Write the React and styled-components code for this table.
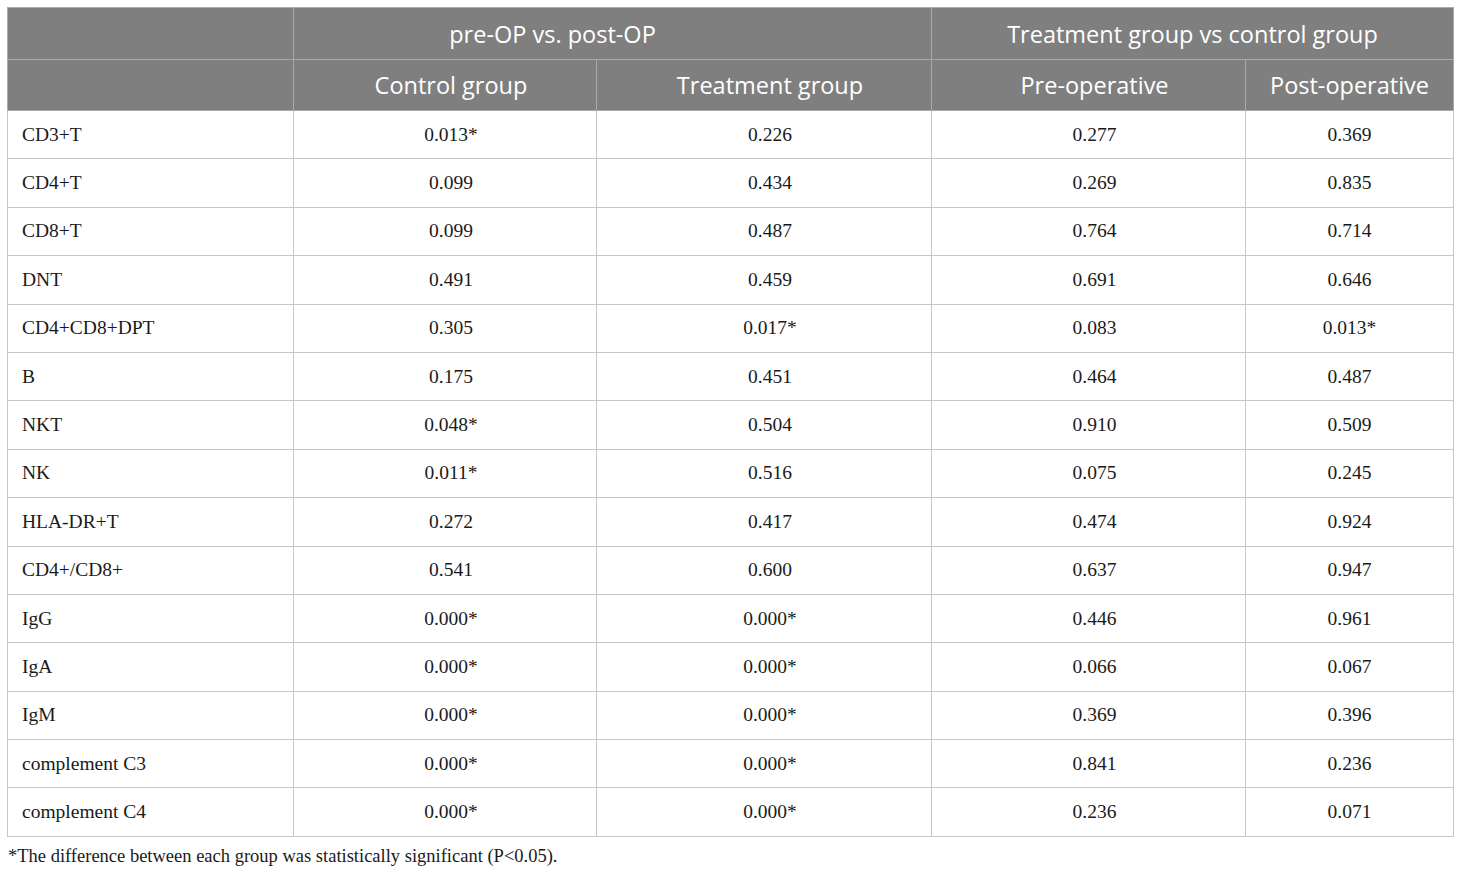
import React from "react";
import styled, { createGlobalStyle } from "styled-components";

const GlobalStyle = createGlobalStyle`
  html, body {
    margin: 0;
    padding: 0;
    background: #ffffff;
  }
`;

const Page = styled.div`
  padding: 7px 8px 0 7px;
  width: 1460px;
  box-sizing: border-box;
`;

const Table = styled.table`
  width: 1446px;
  border-collapse: collapse;
  table-layout: fixed;
  border: 1px solid #c6c6c6;
`;

const HeadCell = styled.th`
  background: #7f7f7f;
  color: #ffffff;
  font-family: "Open Sans", "Noto Sans", sans-serif;
  font-weight: 400;
  font-size: 23.5px;
  text-align: center;
  height: ${({ $h }) => $h}px;
  padding: ${({ $pad }) => $pad || "0"};
  border: 1px solid #a9a9a9;
  box-sizing: border-box;
  white-space: nowrap;
`;

const Cell = styled.td`
  font-family: "Liberation Serif", "Times New Roman", serif;
  font-size: 19.5px;
  color: #1a1a1a;
  text-align: ${({ $left }) => ($left ? "left" : "center")};
  padding: ${({ $left, $shift }) => ($left ? "0 0 0 14px" : `0 0 0 ${$shift ? 12 : 0}px`)};
  height: 48.4px;
  border: 1px solid #c6c6c6;
  box-sizing: border-box;
`;

const Note = styled.p`
  margin: 9px 0 0 1px;
  font-family: "Liberation Serif", "Times New Roman", serif;
  font-size: 18.5px;
  color: #1a1a1a;
`;

const rows = [
  ["CD3+T", "0.013*", "0.226", "0.277", "0.369"],
  ["CD4+T", "0.099", "0.434", "0.269", "0.835"],
  ["CD8+T", "0.099", "0.487", "0.764", "0.714"],
  ["DNT", "0.491", "0.459", "0.691", "0.646"],
  ["CD4+CD8+DPT", "0.305", "0.017*", "0.083", "0.013*"],
  ["B", "0.175", "0.451", "0.464", "0.487"],
  ["NKT", "0.048*", "0.504", "0.910", "0.509"],
  ["NK", "0.011*", "0.516", "0.075", "0.245"],
  ["HLA-DR+T", "0.272", "0.417", "0.474", "0.924"],
  ["CD4+/CD8+", "0.541", "0.600", "0.637", "0.947"],
  ["IgG", "0.000*", "0.000*", "0.446", "0.961"],
  ["IgA", "0.000*", "0.000*", "0.066", "0.067"],
  ["IgM", "0.000*", "0.000*", "0.369", "0.396"],
  ["complement C3", "0.000*", "0.000*", "0.841", "0.236"],
  ["complement C4", "0.000*", "0.000*", "0.236", "0.071"],
];

const widths = [286, 303, 335, 314, 208];

export default function App() {
  return (
    <Page>
      <GlobalStyle />
      <Table>
        <colgroup>
          {widths.map((w, i) => (
            <col key={i} style={{ width: w }} />
          ))}
        </colgroup>
        <thead>
          <tr>
            <HeadCell $h={52} />
            <HeadCell $h={52} colSpan={2} $pad="0 120px 0 0">
              pre-OP vs. post-OP
            </HeadCell>
            <HeadCell $h={52} colSpan={2}>
              Treatment group vs control group
            </HeadCell>
          </tr>
          <tr>
            <HeadCell $h={51} />
            <HeadCell $h={51} $pad="0 0 0 12px">Control group</HeadCell>
            <HeadCell $h={51} $pad="0 0 0 12px">Treatment group</HeadCell>
            <HeadCell $h={51} $pad="0 0 0 12px">Pre-operative</HeadCell>
            <HeadCell $h={51}>Post-operative</HeadCell>
          </tr>
        </thead>
        <tbody>
          {rows.map((r) => (
            <tr key={r[0]}>
              {r.map((v, i) => (
                <Cell key={i} $left={i === 0} $shift={i > 0 && i < 4}>
                  {v}
                </Cell>
              ))}
            </tr>
          ))}
        </tbody>
      </Table>
      <Note>*The difference between each group was statistically significant (P&lt;0.05).</Note>
    </Page>
  );
}
